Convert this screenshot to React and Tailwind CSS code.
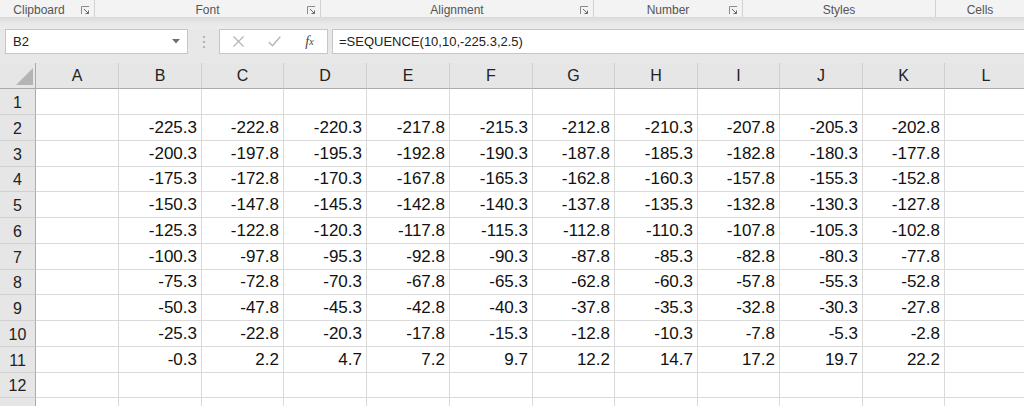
import React from "react";

const groups = [
  { name: "Clipboard", w: "w-[95px]", launcher: true },
  { name: "Font", w: "w-[226px]", launcher: true },
  { name: "Alignment", w: "w-[273px]", launcher: true },
  { name: "Number", w: "w-[149px]", launcher: true },
  { name: "Styles", w: "w-[193px]", launcher: false },
  { name: "Cells", w: "flex-1", launcher: false },
];

const cols = ["A", "B", "C", "D", "E", "F", "G", "H", "I", "J", "K", "L"];

function Launcher() {
  return (
    <svg width="9" height="9" viewBox="0 0 9 9" className="absolute right-[4px] top-[6px]">
      <path d="M0.5 8V0.5H8" fill="none" stroke="#8a8a8a" strokeWidth="1" />
      <path d="M3 3L7.5 7.5M7.5 4.5V7.5H4.5" fill="none" stroke="#6a6a6a" strokeWidth="1" />
    </svg>
  );
}

function cellValue(r, c) {
  // rows 2..11, columns B..K
  if (r < 2 || r > 11 || c < 1 || c > 10) return "";
  const v = -225.3 + ((r - 2) * 10 + (c - 1)) * 2.5;
  return v.toFixed(1);
}

export default function App() {
  const rows = [1, 2, 3, 4, 5, 6, 7, 8, 9, 10, 11, 12, 13];
  const rowH = (r) => (r === 4 || r === 8 || r === 12 ? "h-[25px]" : "h-[26px]");

  return (
    <div className="w-[1024px] h-[406px] overflow-hidden bg-white font-['Liberation_Sans',Arial,sans-serif]">
      {/* ribbon group labels */}
      <div className="flex h-[17px] bg-[#f3f3f3] text-[12px] text-[#555]">
        {groups.map((g) => (
          <div
            key={g.name}
            className={`${g.w} relative flex items-center justify-center pt-[3px] ${g.name === "Cells" ? "" : "border-r border-[#d2d2d2]"} leading-none`}
          >
            <span className={g.name === "Clipboard" ? "-ml-[16px]" : ""}>{g.name}</span>
            {g.launcher && <Launcher />}
          </div>
        ))}
      </div>
      <div className="h-[12px] bg-gradient-to-b from-[#d9d9d9] via-[#e8e8e8] to-[#ececec]" />

      {/* formula bar */}
      <div className="flex h-[34px] items-start bg-[#e8e8e8] pl-[5px]">
        <div className="flex h-[25px] w-[183px] items-center justify-between border border-[#c6c6c6] bg-white pl-[7px] pr-[7px] text-[13px] text-[#222]">
          <span>B2</span>
          <svg width="8" height="5" viewBox="0 0 8 5">
            <path d="M0 0H8L4 4.5Z" fill="#707070" />
          </svg>
        </div>
        <div className="flex h-[25px] w-[31px] flex-col items-center justify-center gap-[3px]">
          <span className="h-[2px] w-[2px] bg-[#b3b3b3]" />
          <span className="h-[2px] w-[2px] bg-[#b3b3b3]" />
          <span className="h-[2px] w-[2px] bg-[#b3b3b3]" />
        </div>
        <div className="flex h-[25px] w-[109px] items-center border border-[#c6c6c6] bg-white">
          <div className="flex w-[37px] justify-center">
            <svg width="11" height="11" viewBox="0 0 11 11">
              <path d="M0.5 0.5L10.5 10.5M10.5 0.5L0.5 10.5" stroke="#b5b5b5" strokeWidth="1.2" />
            </svg>
          </div>
          <div className="flex w-[35px] justify-center">
            <svg width="13" height="11" viewBox="0 0 13 11">
              <path d="M0.8 6L4.5 9.8L12.3 0.8" fill="none" stroke="#b5b5b5" strokeWidth="1.4" />
            </svg>
          </div>
          <div className="flex w-[35px] justify-center font-['Liberation_Serif',serif] text-[14px] italic text-[#444]">
            <span>f</span>
            <span className="mt-[3px] text-[10px]">x</span>
          </div>
        </div>
        <div className="ml-[4px] flex h-[25px] flex-1 items-center border border-r-0 border-[#c6c6c6] bg-white pl-[6px] text-[13px] text-[#222]">
          =SEQUENCE(10,10,-225.3,2.5)
        </div>
      </div>

      {/* sheet grid */}
      <div className="grid grid-cols-[36px_83px_83px_82px_83px_83px_83px_82px_83px_82px_83px_82px_83px]">
        {/* header row */}
        <div className="relative h-[26px] border-r border-b border-[#ababab] bg-[#e6e6e6]">
          <svg width="18" height="18" viewBox="0 0 18 18" className="absolute left-[16px] top-[5px]">
            <path d="M17 0V17H0Z" fill="#b4b4b4" />
          </svg>
        </div>
        {cols.map((c) => (
          <div
            key={c}
            className="flex h-[26px] items-center justify-center border-r border-b border-r-[#d0d0d0] border-b-[#ababab] bg-[#e6e6e6] pt-[1px] text-[16px] text-[#222]"
          >
            {c}
          </div>
        ))}

        {rows.map((r) => (
          <React.Fragment key={r}>
            <div
              className={`${rowH(r)} flex items-center justify-center border-r border-b border-r-[#ababab] border-b-[#d0d0d0] bg-[#e6e6e6] pt-[2px] text-[16px] text-[#222]`}
            >
              {r < 13 ? r : ""}
            </div>
            {cols.map((c, ci) => (
              <div
                key={c}
                className={`${rowH(r)} flex items-end justify-end border-r border-b border-[#dadada] pb-[4px] pr-[4px] text-[17px] leading-none text-[#111]`}
              >
                {cellValue(r, ci)}
              </div>
            ))}
          </React.Fragment>
        ))}
      </div>
    </div>
  );
}
